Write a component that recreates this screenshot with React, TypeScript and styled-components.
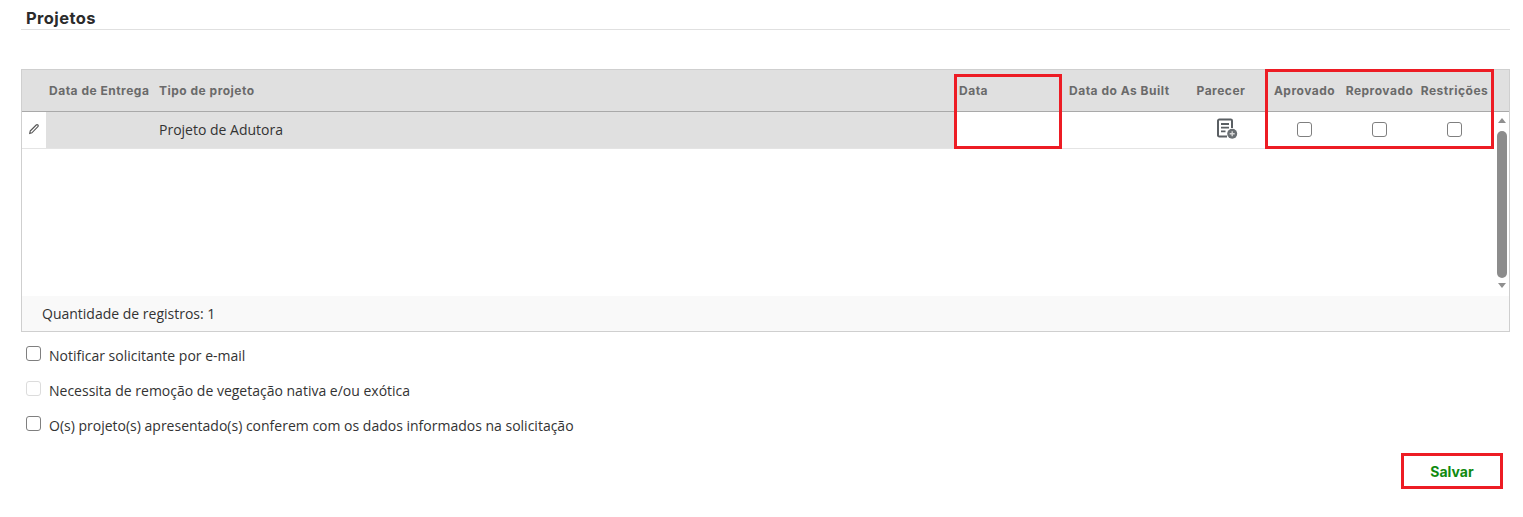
import * as React from 'react';
import styled, {createGlobalStyle} from 'styled-components';

const GlobalStyle = createGlobalStyle`
    html, body {
        margin: 0;
        padding: 0;
        background: #fff;
    }
    body {
        font-family: "Open Sans", "Liberation Sans", sans-serif;
        color: #333;
    }
`;

const Page = styled.div`
    width: 1523px;
    height: 517px;
    padding: 0 13px 0 21px;
    box-sizing: border-box;
    overflow: hidden;
`;
const SectionTitle = styled.h2`
    margin: 0 0 39px;
    height: 30px;
    box-sizing: border-box;
    padding: 9px 0 0 5px;
    border-bottom: 1px solid #e0e0e0;
    font-family: Inter, "Liberation Sans", sans-serif;
    font-size: 16.5px;
    line-height: 18px;
    font-weight: 700;
    letter-spacing: 0.4px;
    color: #2b2b2b;
`;
const Grid = styled.div`
    position: relative;
    height: 263px;
    box-sizing: border-box;
    border: 1px solid #cfcfcf;
    display: flex;
    flex-direction: column;
`;
const COLUMNS = '24px 109px 800px 110px 110px 92px 75px 75px 75px';
const HeaderRow = styled.div`
    display: grid;
    grid-template-columns: ${COLUMNS} 1fr;
    height: 42px;
    box-sizing: border-box;
    background: #e0e0e0;
    border-bottom: 1px solid #a9a9a9;
    align-items: center;
`;
const HeaderCell = styled.div<{$center?: boolean}>`
    font-family: Inter, "Liberation Sans", sans-serif;
    font-size: 12px;
    font-weight: 700;
    letter-spacing: 0.5px;
    color: #6a6a6a;
    white-space: nowrap;
    text-align: ${({$center}) => ($center ? 'center' : 'left')};
    padding-left: ${({$center}) => ($center ? '0' : '4px')};
`;
const FirstHeaderCell = styled(HeaderCell)`
    padding-left: 3px;
`;
const Body = styled.div`
    flex: 1;
    display: flex;
    min-height: 0;
`;
const Rows = styled.div`
    flex: 1;
`;
const Row = styled.div`
    display: grid;
    grid-template-columns: ${COLUMNS};
    height: 37px;
    box-sizing: border-box;
    border-bottom: 1px solid #e4e4e4;
    align-items: stretch;
`;
const Cell = styled.div<{$shaded?: boolean; $center?: boolean}>`
    display: flex;
    align-items: center;
    justify-content: ${({$center}) => ($center ? 'center' : 'flex-start')};
    background: ${({$shaded}) => ($shaded ? '#e0e0e0' : 'transparent')};
    font-size: 14px;
    color: #333;
    padding-left: ${({$center}) => ($center ? '0' : '4px')};
    padding-bottom: 2px;
    box-sizing: border-box;
`;
const IconCell = styled(Cell)`
    padding-left: 12px;
`;
const Scrollbar = styled.div`
    width: 15px;
    display: flex;
    flex-direction: column;
    align-items: center;
    padding-top: 6px;
    box-sizing: border-box;
`;
const ArrowUp = styled.div`
    width: 0;
    height: 0;
    border-left: 4px solid transparent;
    border-right: 4px solid transparent;
    border-bottom: 5px solid #8f8f8f;
`;
const ArrowDown = styled.div`
    width: 0;
    height: 0;
    margin-top: 5px;
    border-left: 4px solid transparent;
    border-right: 4px solid transparent;
    border-top: 5px solid #8f8f8f;
`;
const Thumb = styled.div`
    width: 10px;
    height: 147px;
    margin-top: 8px;
    border-radius: 5px;
    background: #8c8c8c;
`;
const GridFooter = styled.div`
    height: 35px;
    display: flex;
    align-items: center;
    padding-left: 20px;
    background: #f9f9f9;
    font-size: 14px;
    color: #333;
`;
const Box = styled.span<{$disabled?: boolean}>`
    display: inline-block;
    flex: none;
    width: 15px;
    height: 15px;
    box-sizing: border-box;
    border-radius: 3px;
    background: #fff;
    border: 1px solid ${({$disabled}) => ($disabled ? '#dcdcdc' : '#7f7f7f')};
`;
const Options = styled.div`
    padding: 4px 0 0 5px;
    display: flex;
    flex-direction: column;
`;
const Option = styled.label`
    display: flex;
    align-items: flex-start;
    gap: 8px;
    height: 35px;
    font-size: 14px;
    line-height: 19px;
    color: #333;
    padding-top: 10px;
    box-sizing: border-box;
`;
const Actions = styled.div`
    display: flex;
    justify-content: flex-end;
    padding: 12px 7px 0 0;
`;
const SaveButton = styled.button`
    width: 102px;
    height: 36px;
    background: #fff;
    border: 3px solid #ed1c24;
    font-family: Inter, "Liberation Sans", sans-serif;
    font-size: 14px;
    font-weight: 700;
    color: #0f8a0f;
    padding: 0;
`;
const Highlight = styled.div`
    position: absolute;
    box-sizing: border-box;
    border: 3px solid #ed1c24;
    pointer-events: none;
`;

const PencilIcon = () => (
    <svg width="12" height="12" viewBox="0 0 12 12" fill="none" stroke="#555" strokeWidth="1.100">
        <path d="M2.200 8 8.200 2a1.100 1.100 0 0 1 1.700 1.700L3.900 9.800 1.700 10.400Z" />
    </svg>
);

const ReportIcon = () => (
    <svg width="22" height="22" viewBox="0 0 22 22">
        <path d="M11 18.500H3.300A1.300 1.300 0 0 1 2 17.200V2.800A1.300 1.300 0 0 1 3.300 1.500h11.400A1.300 1.300 0 0 1 16 2.800V10" fill="none" stroke="#5a5f63" strokeWidth="2" />
        <path d="M5 6h8M5 9.700h8M5 13.400h4.500" stroke="#5a5f63" strokeWidth="1.800" />
        <circle cx="16.200" cy="15.800" r="5" fill="#6a6f73" />
        <path d="M13.700 15.800h5M16.200 13.300v5" stroke="#d8d8d8" strokeWidth="1.400" />
    </svg>
);

const OPTIONS = [
    {label: 'Notificar solicitante por e-mail'},
    {label: 'Necessita de remoção de vegetação nativa e/ou exótica', disabled: true},
    {label: 'O(s) projeto(s) apresentado(s) conferem com os dados informados na solicitação'},
];

const App = () => (
    <Page>
        <GlobalStyle />
        <SectionTitle>Projetos</SectionTitle>
        <Grid>
            <HeaderRow>
                <span />
                <FirstHeaderCell>Data de Entrega</FirstHeaderCell>
                <HeaderCell>Tipo de projeto</HeaderCell>
                <HeaderCell>Data</HeaderCell>
                <HeaderCell>Data do As Built</HeaderCell>
                <HeaderCell $center>Parecer</HeaderCell>
                <HeaderCell $center>Aprovado</HeaderCell>
                <HeaderCell $center>Reprovado</HeaderCell>
                <HeaderCell $center>Restrições</HeaderCell>
            </HeaderRow>
            <Body>
                <Rows>
                    <Row>
                        <Cell $center><PencilIcon /></Cell>
                        <Cell $shaded />
                        <Cell $shaded>Projeto de Adutora</Cell>
                        <Cell />
                        <Cell />
                        <IconCell $center><ReportIcon /></IconCell>
                        <Cell $center><Box /></Cell>
                        <Cell $center><Box /></Cell>
                        <Cell $center><Box /></Cell>
                    </Row>
                </Rows>
                <Scrollbar>
                    <ArrowUp />
                    <Thumb />
                    <ArrowDown />
                </Scrollbar>
            </Body>
            <GridFooter>Quantidade de registros: 1</GridFooter>
            <Highlight style={{left: 932, top: 4, width: 108, height: 75}} />
            <Highlight style={{left: 1243, top: -1, width: 229, height: 80}} />
        </Grid>
        <Options>
            {OPTIONS.map((option) => (
                <Option key={option.label}>
                    <Box $disabled={option.disabled} />
                    {option.label}
                </Option>
            ))}
        </Options>
        <Actions>
            <SaveButton>Salvar</SaveButton>
        </Actions>
    </Page>
);

export default App;
